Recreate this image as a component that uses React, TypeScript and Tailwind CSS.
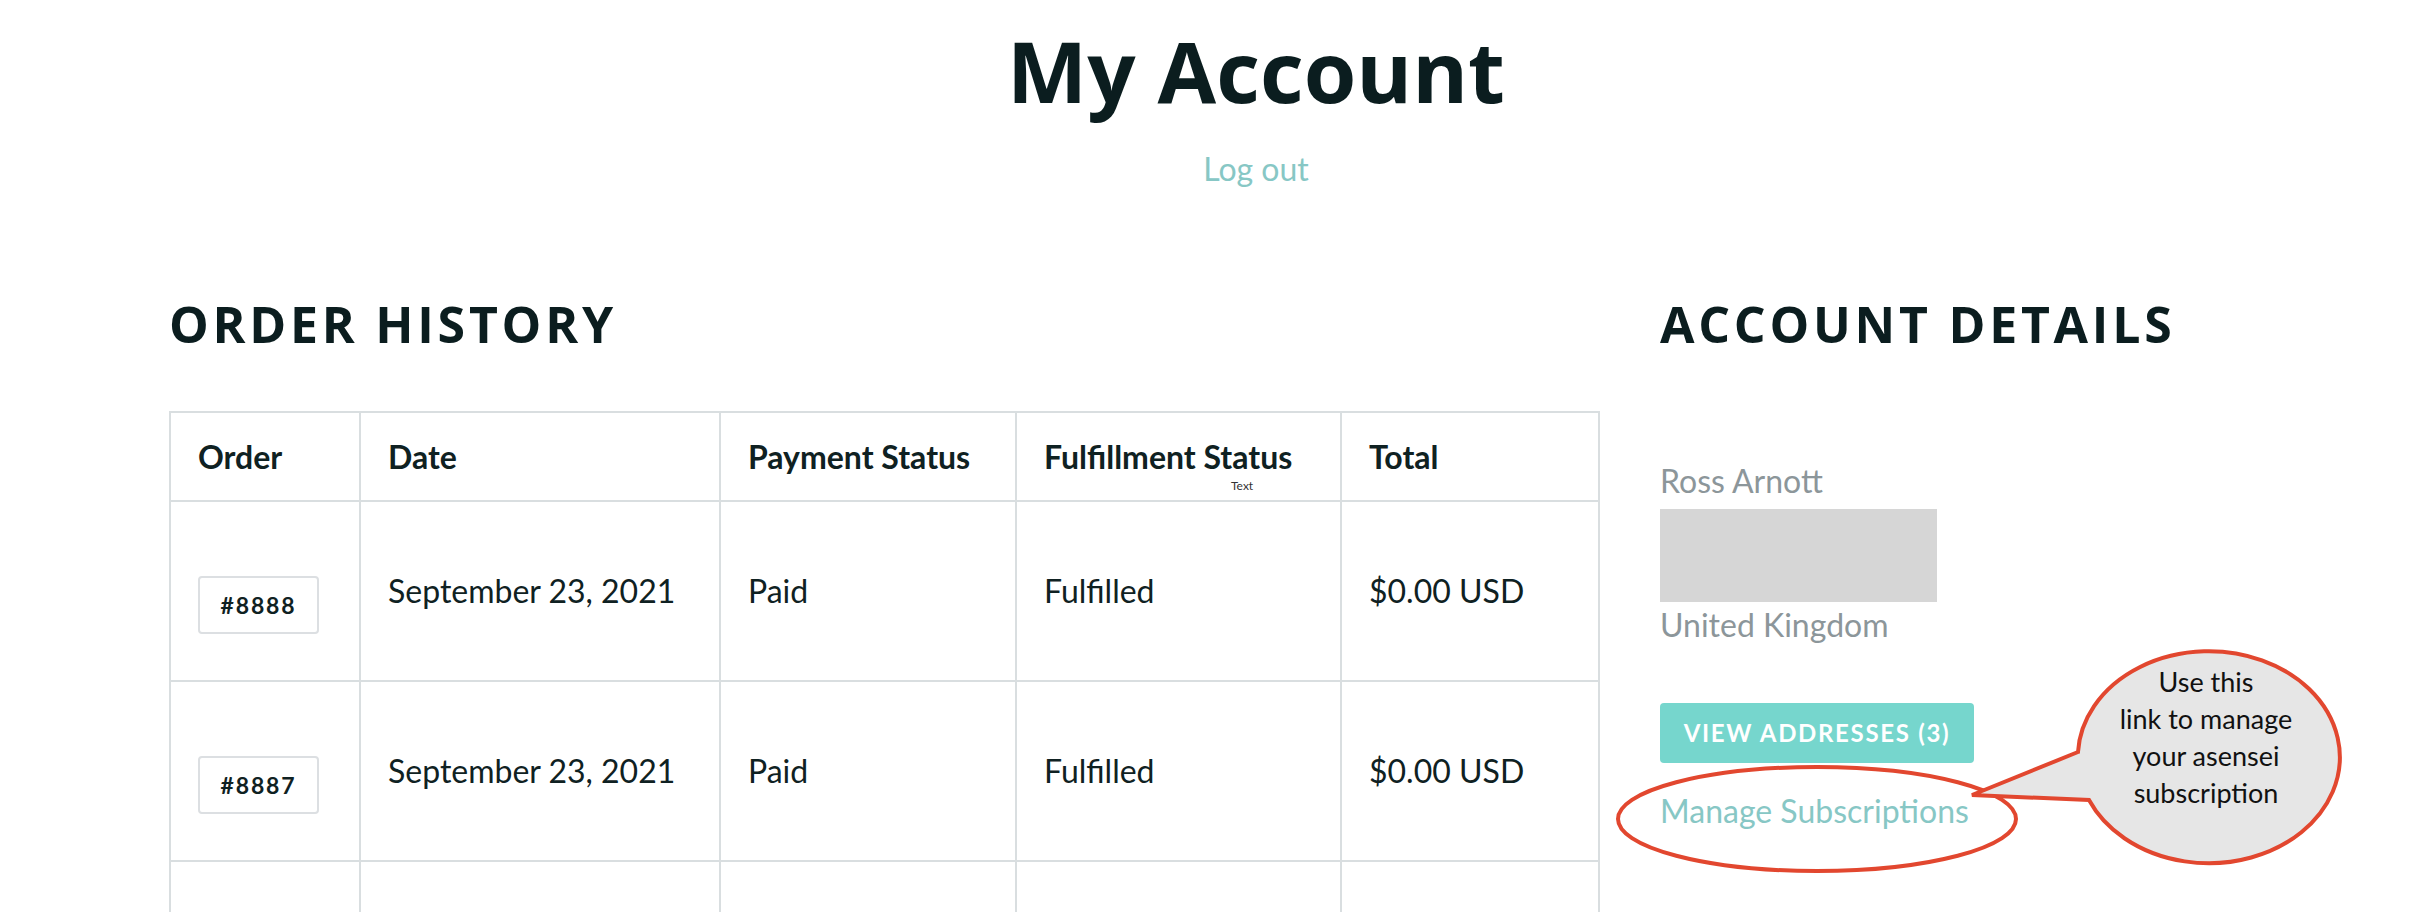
import React from 'react';

const orders = [
  { id: '#8888', date: 'September 23, 2021', payment: 'Paid', fulfillment: 'Fulfilled', total: '$0.00 USD' },
  { id: '#8887', date: 'September 23, 2021', payment: 'Paid', fulfillment: 'Fulfilled', total: '$0.00 USD' },
];

function Callout() {
  return (
    <svg
      className="absolute left-0 top-0 pointer-events-none"
      width="2426"
      height="912"
      viewBox="0 0 2426 912"
    >
      {/* ring round the link */}
      <ellipse cx="1817" cy="819" rx="199" ry="52" fill="none" stroke="#e2472f" strokeWidth="4" />
      {/* speech bubble */}
      <path
        d="M 2078 752 L 1972 795 L 2089 800 A 131 106 0 1 0 2078 752 Z"
        fill="#e6e6e6"
        stroke="#e2472f"
        strokeWidth="4"
        strokeLinejoin="miter"
      />
      <g fontFamily="Lato, sans-serif" fontSize="27" fill="#111" textAnchor="middle">
        <text x="2206" y="692">Use this</text>
        <text x="2206" y="729">link to manage</text>
        <text x="2206" y="766">your asensei</text>
        <text x="2206" y="803">subscription</text>
      </g>
    </svg>
  );
}

const cell = 'border-2 border-[#d9dee0] px-[27px]';

export default function App() {
  return (
    <div className="relative h-[912px] w-full overflow-hidden bg-white pl-[169px] pr-[83px] font-['Lato',sans-serif] text-[#0f2122]">
      {/* Page title */}
      <div className="pt-[28px] text-center">
        <h1 className="font-['Open_Sans',sans-serif] text-[85px] font-bold leading-none text-[#0b1d1f]">
          My Account
        </h1>
        <a href="#" className="mt-[38px] inline-block text-[32px] leading-[36px] text-[#87c7c5]">
          Log out
        </a>
      </div>

      <div className="mt-[112px] flex gap-[62px]">
        {/* Order history */}
        <div className="w-[1429px] shrink-0">
          <h2 className="font-['Open_Sans',sans-serif] text-[50px] font-bold leading-none tracking-[0.075em] text-[#0b1d1f]">
            ORDER HISTORY
          </h2>
          <table className="mt-[62px] w-full table-fixed border-collapse border-2 border-[#d9dee0]">
            <colgroup>
              <col className="w-[190px]" />
              <col className="w-[360px]" />
              <col className="w-[296px]" />
              <col className="w-[325px]" />
              <col className="w-[258px]" />
            </colgroup>
            <thead>
              <tr className="h-[89px] text-left text-[32px]">
                <th className={`${cell} font-bold`}>Order</th>
                <th className={`${cell} font-bold`}>Date</th>
                <th className={`${cell} font-bold`}>Payment Status</th>
                <th className={`${cell} relative font-bold`}>
                  Fulfillment Status
                  <span className="absolute left-[214px] top-[67px] text-[12px] font-normal leading-none text-[#333]">
                    Text
                  </span>
                </th>
                <th className={`${cell} font-bold`}>Total</th>
              </tr>
            </thead>
            <tbody>
              {orders.map((o) => (
                <tr key={o.id} className="h-[180px] text-[32px]">
                  <td className={cell}>
                    <div className="mt-[28px] inline-flex h-[58px] w-[121px] items-center justify-center rounded-[4px] border-2 border-[#dcdfe2] text-[23px] font-bold tracking-[0.08em]">
                      {o.id}
                    </div>
                  </td>
                  <td className={cell}>{o.date}</td>
                  <td className={cell}>{o.payment}</td>
                  <td className={cell}>{o.fulfillment}</td>
                  <td className={cell}>{o.total}</td>
                </tr>
              ))}
              {/* next row, below the fold */}
              <tr className="h-[180px]">
                <td className={cell} />
                <td className={cell} />
                <td className={cell} />
                <td className={cell} />
                <td className={cell} />
              </tr>
            </tbody>
          </table>
        </div>

        {/* Account details */}
        <div className="flex-1">
          <h2 className="font-['Open_Sans',sans-serif] text-[50px] font-bold leading-none tracking-[0.075em] text-[#0b1d1f]">
            ACCOUNT DETAILS
          </h2>
          <p className="mt-[114px] text-[32px] leading-[36px] text-[#8c969a]">Ross Arnott</p>
          <div className="mt-[10px] h-[93px] w-[277px] bg-[#d6d6d6]" />
          <p className="mt-[5px] text-[32px] leading-[36px] text-[#8c969a]">United Kingdom</p>
          <button className="mt-[60px] flex h-[60px] w-[314px] items-center justify-center rounded-[4px] bg-[#76d6cd] text-[24px] font-bold tracking-[0.07em] text-white">
            VIEW ADDRESSES (3)
          </button>
          <a href="#" className="mt-[30px] block text-[32px] leading-[36px] text-[#87c7c5]">
            Manage Subscriptions
          </a>
        </div>
      </div>

      <Callout />
    </div>
  );
}
